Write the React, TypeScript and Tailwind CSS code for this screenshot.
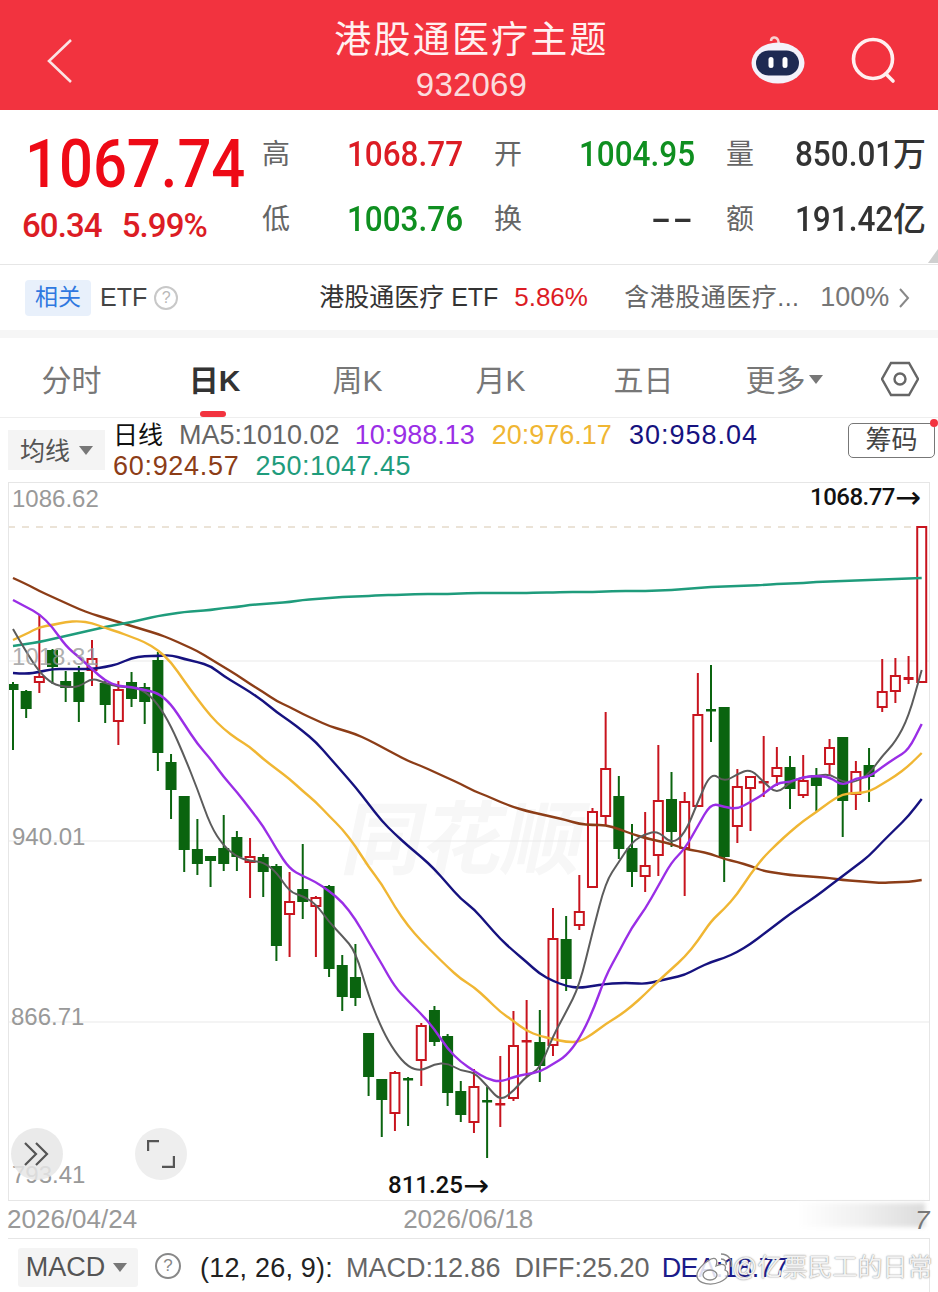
import React from "react";

type Candle = [number, number, number, number, number];

// [up, wickTop, bodyTop, bodyBottom, wickBottom], page y coordinates
const candles: Candle[] = [
  [0,683,685,691,751],[0,691,692,710,719],[1,616,678,683,694],[0,650,651,668,685],[0,672,682,689,703],
  [0,667,673,703,723],[1,641,660,671,687],[0,682,684,706,724],[1,682,691,722,746],[0,673,683,700,708],
  [0,684,688,703,725],[0,653,661,754,772],[0,755,763,791,820],[0,797,797,851,873],[0,820,850,865,876],
  [0,857,857,862,888],[0,816,849,865,872],[0,832,838,858,872],[1,839,858,863,899],[0,855,858,873,898],
  [0,865,867,947,962],[1,873,903,915,958],[0,845,890,903,920],[1,897,899,907,958],[0,886,887,970,978],
  [0,956,966,998,1012],[0,945,978,999,1007],[0,1034,1034,1078,1097],[0,1080,1080,1101,1138],[1,1072,1074,1114,1132],
  [0,1078,1079,1081,1127],[1,1024,1027,1061,1087],[0,1007,1011,1043,1047],[0,1035,1037,1094,1107],[0,1082,1092,1116,1123],
  [1,1070,1088,1123,1134],[0,1088,1101,1103,1159],[1,1057,1104,1106,1128],[1,1012,1047,1099,1102],[1,1001,1041,1043,1078],
  [0,1011,1043,1067,1083],[1,909,940,1046,1057],[0,917,940,980,992],[1,876,913,926,931],[1,809,813,888,888],
  [1,713,770,817,827],[0,777,797,850,860],[0,825,849,873,888],[1,813,867,877,893],[1,746,802,856,877],
  [0,773,800,833,848],[1,793,803,849,897],[1,674,716,807,807],[0,666,710,712,743],[0,708,708,858,883],
  [1,770,788,827,844],[1,778,778,789,832],[1,737,782,784,798],[1,748,769,777,787],[0,757,768,790,810],
  [1,756,782,796,799],[0,769,776,787,812],[1,740,749,765,777],[0,738,738,802,838],[1,762,773,795,811],
  [0,749,766,778,803],[1,660,693,708,713],[1,659,677,692,704],[1,657,678,681,685],[1,528,528,683,683],
];

const ma5 = [630,653,673,685,688,688,679,684,688,688,692,705,727,757,790,827,847,858,862,863,873,893,897,905,923,937,952,997,1030,1053,1068,1072,1065,1064,1072,1073,1087,1102,1092,1077,1070,1037,1013,987,933,883,863,843,835,832,845,835,803,773,783,775,770,783,795,783,778,777,775,783,783,775,757,743,718,671];
const ma10 = [601,608,615,628,647,658,670,682,687,688,691,694,705,725,745,760,778,793,810,827,850,870,877,883,892,903,920,943,965,988,1002,1015,1030,1050,1063,1072,1080,1083,1078,1075,1073,1065,1057,1040,1013,977,953,928,910,887,863,850,827,804,808,810,803,795,784,783,778,777,778,787,779,778,768,759,751,725];
const ma20 = [641,635,628,626,623,622,624,629,633,638,643,651,663,682,700,717,730,740,748,760,770,780,792,803,817,830,847,868,885,908,927,942,955,968,980,988,1000,1013,1022,1032,1037,1040,1043,1043,1035,1025,1017,1007,995,982,970,958,942,922,910,895,875,858,845,833,822,813,803,795,794,793,785,777,767,754];
const ma30 = [674,675,673,670,670,670,670,668,665,659,657,657,656,660,663,667,677,685,693,702,713,722,732,743,758,773,788,805,822,835,847,858,870,885,900,910,925,940,952,963,975,982,987,989,987,985,984,984,985,982,979,976,969,963,959,953,945,935,925,915,906,897,887,877,867,857,843,830,817,800];
const ma60 = [579,585,592,598,604,610,615,619,623,627,631,635,640,646,652,660,668,676,685,693,702,708,715,721,727,731,735,741,748,755,762,767,773,779,785,792,797,803,808,812,815,818,821,825,826,826,830,835,839,842,845,850,852,855,860,863,867,872,874,876,877,878,879,881,882,883,884,883,883,881];
const ma250 = [647,645,643,640,637,634,631,628,625.5,623,620,617,615,613,612,611,609,608,606,605,604,603,601,600,599,598,597.5,597,596,596,595.5,595,595,595,594.5,594,594,594,594,594,593.5,593.5,593,593,593,592.5,592,592,592,591.5,591,590,589,588,587.5,587,586.5,586,585,584.5,584,583,582.5,582,581.5,581,580.5,580,579.5,579];

const candleX = (i: number) => 13 + i * 13.17;

// quadratic smoothing through the midpoints, the app's lines have no hard corners
const toPath = (ys: number[]) => {
  let d = `M${candleX(0).toFixed(1)} ${ys[0]}`;
  for (let i = 1; i < ys.length - 1; i++) {
    const midX = (candleX(i) + candleX(i + 1)) / 2;
    const midY = (ys[i] + ys[i + 1]) / 2;
    d += ` Q${candleX(i).toFixed(1)} ${ys[i]} ${midX.toFixed(1)} ${midY}`;
  }
  return d + ` L${candleX(ys.length - 1).toFixed(1)} ${ys[ys.length - 1]}`;
};

const RED = "#c8141e";
const GREEN = "#0a640f";

const KLineChart = () => (
  <svg viewBox="9 484 920 717" className="absolute inset-0 w-full h-full">
    {[662, 842, 1023].map((y) => (
      <line key={y} x1="8" x2="930" y1={y} y2={y} stroke="#eaeaea" strokeWidth="1.2" />
    ))}
    <line x1="8" x2="930" y1="528" y2="528" stroke="#d8c8b0" strokeWidth="1.2" strokeDasharray="7 7" />
    {candles.map(([up, wickTop, bodyTop, bodyBottom, wickBottom], i) => {
      const x = candleX(i);
      const color = up ? RED : GREEN;
      const isDoji = bodyBottom - bodyTop < 4;
      return (
        <g key={i}>
          <line x1={x} x2={x} y1={wickTop} y2={wickBottom} stroke={color} strokeWidth="2" />
          {isDoji ? (
            <rect x={x - 5} y={bodyTop} width="10" height={Math.max(bodyBottom - bodyTop, 2.5)} fill={color} />
          ) : up ? (
            <rect x={x - 4.5} y={bodyTop} width="9" height={bodyBottom - bodyTop} fill="#fff" stroke={color} strokeWidth="2" />
          ) : (
            <rect x={x - 5.5} y={bodyTop} width="11" height={bodyBottom - bodyTop} fill={color} />
          )}
        </g>
      );
    })}
    <path d={toPath(ma60)} fill="none" stroke="#8c3d17" strokeWidth="2.4" />
    <path d={toPath(ma250)} fill="none" stroke="#1f9c7c" strokeWidth="2.4" />
    <path d={toPath(ma30)} fill="none" stroke="#16127f" strokeWidth="2.4" />
    <path d={toPath(ma20)} fill="none" stroke="#f0b633" strokeWidth="2.4" />
    <path d={toPath(ma5)} fill="none" stroke="#5c5c5c" strokeWidth="2" />
    <path d={toPath(ma10)} fill="none" stroke="#9a2ee6" strokeWidth="2.4" />
  </svg>
);

const Stat = ({ label, value, unit, color, stretch = "scale-x-[0.9]" }: { label: string; value: string; unit?: string; color: string; stretch?: string }) => (
  <div className="flex items-center justify-between">
    <span className="text-[28px] text-[#666]">{label}</span>
    <span className={`flex items-baseline text-[35px] font-medium font-['Roboto','Noto_Sans_CJK_SC',sans-serif] ${color}`}>
      <span className={`inline-block origin-right ${stretch}`}>{value}</span>
      {unit && <span className="text-[33px]">{unit}</span>}
    </span>
  </div>
);

const tabs = ["分时", "日K", "周K", "月K", "五日"];

export default function App() {
  return (
    <div className="w-[938px] h-[1292px] overflow-hidden bg-white font-['Liberation_Sans','Noto_Sans_CJK_SC',sans-serif]">
      {/* header */}
      <div className="flex h-[110px] bg-[#f2333f] text-white">
        <div className="w-[304px] flex items-center pl-[47px] pt-[11px]">
          <svg width="26" height="44" viewBox="0 0 26 44" fill="none" stroke="#fbe3e4" strokeWidth="2.6">
            <polyline points="24,1 2,22 24,43" />
          </svg>
        </div>
        <div className="w-[335px] flex flex-col items-center pt-[15px]">
          <div className="text-[37px] leading-[52px] tracking-[2.2px] text-[#fff1f1] whitespace-nowrap">港股通医疗主题</div>
          <div className="text-[33px] leading-[36px] tracking-[0.2px] text-[#fbdcdd]">932069</div>
        </div>
        <div className="flex-1 flex items-start pt-[37px] pl-[111px] gap-[44px]">
          <svg width="56" height="50" viewBox="0 0 56 50" className="-mt-[2px]">
            <path d="M21 6 C21 2 26 1 28 5 L29 9" fill="none" stroke="#f8d0d0" strokeWidth="2.5" />
            <ellipse cx="28" cy="28" rx="26.5" ry="20.5" fill="#f4f2fa" />
            <rect x="6" y="15.5" width="43" height="25" rx="12.5" fill="#1e2a52" />
            <rect x="18.5" y="22" width="5" height="11" rx="2.5" fill="#fff" />
            <rect x="32.5" y="22" width="5" height="11" rx="2.5" fill="#fff" />
          </svg>
          <svg width="48" height="50" viewBox="0 0 48 50" fill="none" stroke="#fff0f0" strokeWidth="3.6" className="-mt-[2px]">
            <circle cx="23" cy="24" r="19.5" />
            <line x1="36" y1="39" x2="43" y2="46" strokeLinecap="round" />
          </svg>
        </div>
      </div>

      {/* quote */}
      <div className="relative flex h-[155px] border-b border-[#e6e6e6] pl-[22px]">
        <div className="w-[240px] flex flex-col">
          <div className="text-[66px] leading-[64px] mt-[23px] ml-[3px] font-medium origin-left scale-x-[0.905] whitespace-nowrap text-[#ee0a16] font-['Roboto',sans-serif]">1067.74</div>
          <div className="flex gap-[20px] text-[33px] leading-[36px] mt-[11px] font-medium tracking-[-0.9px] text-[#dc1c24] font-['Roboto',sans-serif]">
            <span>60.34</span>
            <span>5.99%</span>
          </div>
        </div>
        <div className="grid grid-cols-[201px_201px_200px] gap-x-[31px] content-start pt-[25px] gap-y-[25px] auto-rows-[40px]">
          <Stat label="高" value="1068.77" color="text-[#dc1c24]" />
          <Stat label="开" value="1004.95" color="text-[#0f8f20]" />
          <Stat label="量" value="850.01" unit="万" color="text-[#333]" />
          <Stat label="低" value="1003.76" color="text-[#0f8f20]" />
          <Stat label="换" value="--" color="text-[#333]" stretch="scale-x-[1.7] tracking-[1px]" />
          <Stat label="额" value="191.42" unit="亿" color="text-[#333]" />
        </div>
        <svg width="10" height="14" viewBox="0 0 10 14" className="absolute right-0 bottom-[1px]">
          <polygon points="10,0 10,14 0,14" fill="#cfcfcf" />
        </svg>
      </div>

      {/* related ETF */}
      <div className="flex items-center h-[65px] pl-[25px] text-[25px] whitespace-nowrap">
        <span className="w-[66px] h-[36px] flex items-center justify-center rounded-[4px] bg-[#e8f0fb] text-[23px] text-[#2f78e0]">相关</span>
        <span className="ml-[9px] text-[#444]">ETF</span>
        <span className="ml-[7px] w-[24px] h-[24px] rounded-full border-2 border-[#c8c8c8] flex items-center justify-center text-[16px] text-[#b8b8b8]">?</span>
        <span className="ml-[141px] w-[180px] text-[#333]">港股通医疗 ETF</span>
        <span className="ml-[15px] w-[73px] text-[26px] text-[#dc1c24]">5.86%</span>
        <span className="ml-[37px] w-[181px] text-[#666] tracking-[0.5px]">含港股通医疗...</span>
        <span className="ml-[15px] text-[27px] text-[#777]">100%</span>
        <svg width="12" height="22" viewBox="0 0 12 22" fill="none" stroke="#888" strokeWidth="2" className="ml-[9px]">
          <polyline points="2,2 10,11 2,20" />
        </svg>
      </div>
      <div className="h-[8px] bg-[#f6f6f6]" />

      {/* period tabs */}
      <div className="flex h-[80px] border-b border-[#eeeeee] text-[30px] text-[#777]">
        {tabs.map((t, i) => (
          <div key={t} className="relative w-[143px] flex items-center justify-center pt-[5px]">
            <span className={i === 1 ? "font-bold text-[#333]" : ""}>{t}</span>
            {i === 1 && <span className="absolute bottom-0 left-[57px] w-[26px] h-[6px] rounded-full bg-[#f2333f]" />}
          </div>
        ))}
        <div className="w-[143px] flex items-center justify-center pt-[5px] pr-[5px]">
          更多
          <svg width="14" height="10" viewBox="0 0 14 10" className="ml-[3px]"><polygon points="0,0 14,0 7,9" fill="#777" /></svg>
        </div>
        <div className="flex items-center pl-[23px] pt-[2px]">
          <svg width="38" height="36" viewBox="0 0 38 36" fill="none" stroke="#666" strokeWidth="2.4">
            <polygon points="10,2 28,2 37,18 28,34 10,34 1,18" />
            <circle cx="19" cy="18" r="5.5" />
          </svg>
        </div>
      </div>

      {/* ma legend */}
      <div className="relative h-[64px] text-[27px] leading-[31px] whitespace-nowrap">
        <div className="absolute left-[8px] top-[12px] w-[97px] h-[40px] flex items-center justify-center bg-[#f4f4f4] pt-[2px] text-[25px] text-[#555]">
          均线
          <svg width="14" height="10" viewBox="0 0 14 10" className="ml-[9px]"><polygon points="0,0 14,0 7,9" fill="#777" /></svg>
        </div>
        <div className="ml-[113px] pt-[2px]">
          <div className="flex">
            <span className="text-[#111] text-[25px] w-[66px]">日线</span>
            <span className="text-[#666]">MA5:1010.02</span>
            <span className="ml-[15px] text-[#9a2ee6]">10:988.13</span>
            <span className="ml-[17px] text-[#f0b633]">20:976.17</span>
            <span className="ml-[17px] text-[#16127f] tracking-[1px]">30:958.04</span>
          </div>
          <div className="flex">
            <span className="text-[#8c3d17] tracking-[0.7px]">60:924.57</span>
            <span className="ml-[16px] text-[#1f9c7c] tracking-[0.5px]">250:1047.45</span>
          </div>
        </div>
        <div className="absolute left-[848px] top-[5px] w-[87px] h-[35px] rounded-[5px] border border-[#777] flex items-center justify-center text-[26px] text-[#444]">筹码</div>
        <span className="absolute left-[930px] top-[1px] w-[8px] h-[8px] rounded-full bg-[#f2333f]" />
      </div>

      {/* chart */}
      <div className="relative ml-[8px] w-[922px] h-[719px] border border-[#e6e6e6] overflow-hidden text-[24px] leading-[30px]">
        <div className="absolute left-[336px] top-[318px] text-[80px] leading-[80px] font-bold -skew-x-12 text-[#f7f7f7]">同花顺</div>
        <KLineChart />
        <span className="absolute left-[3px] top-[1px] text-[#999]">1086.62</span>
        <span className="absolute left-[3px] top-[159px] text-[#999]/80">1018.31</span>
        <span className="absolute left-[3px] top-[339px] text-[#999]">940.01</span>
        <span className="absolute left-[2px] top-[519px] text-[#999]">866.71</span>
        <span className="absolute left-[3px] top-[677px] text-[#999]">793.41</span>
        <span className="absolute left-[801px] -top-[1px] flex items-center font-medium text-[#111] tracking-[-0.5px] font-['Roboto',sans-serif]">
          1068.77<span className="font-normal text-[31px] leading-[30px] font-['DejaVu_Sans',sans-serif]">→</span>
        </span>
        <span className="absolute left-[379px] top-[687px] flex items-center font-medium text-[#111] font-['Roboto',sans-serif]">
          811.25<span className="font-normal text-[31px] leading-[30px] font-['DejaVu_Sans',sans-serif]">→</span>
        </span>
        <div className="absolute left-[2px] top-[645px] w-[52px] h-[52px] rounded-full bg-[#e6e6e6]/85 flex items-center justify-center">
          <svg width="28" height="28" viewBox="0 0 28 28" fill="none" stroke="#555" strokeWidth="2.2">
            <polyline points="2,3 13,14 2,25" />
            <polyline points="13,3 24,14 13,25" />
          </svg>
        </div>
        <div className="absolute left-[126px] top-[645px] w-[52px] h-[52px] rounded-full bg-[#eeeeee] flex items-center justify-center">
          <svg width="28" height="28" viewBox="0 0 28 28" fill="none" stroke="#555" strokeWidth="2.4">
            <polyline points="1,11 1,1 12,1" />
            <polyline points="27,16 27,27 15,27" />
          </svg>
        </div>
      </div>

      {/* date axis */}
      <div className="relative flex h-[37px] items-center pl-[7px] text-[26px] text-[#999]">
        <span>2026/04/24</span>
        <span className="ml-[266px]">2026/06/18</span>
        <div className="absolute left-[797px] top-[2px] w-[128px] h-[24px] bg-linear-to-r from-white via-[#f0f0f0] to-[#dcdcdc] blur-[2px]" />
        <span className="absolute left-[915px] top-0 italic text-[#777]">7</span>
      </div>

      {/* macd */}
      <div className="relative ml-[8px] w-[922px] h-[60px] border-t border-r border-[#e6e6e6] text-[27px] whitespace-nowrap">
        <div className="absolute left-[10px] top-[9px] w-[120px] h-[39px] rounded-[3px] bg-[#f4f4f4] flex items-center justify-center pr-[3px] text-[#555]">
          MACD
          <svg width="14" height="10" viewBox="0 0 14 10" className="ml-[8px]"><polygon points="0,0 14,0 7,9" fill="#777" /></svg>
        </div>
        <span className="absolute left-[147px] top-[14px] w-[26px] h-[26px] rounded-full border-2 border-[#888] flex items-center justify-center text-[17px] text-[#888]">?</span>
        <div className="flex pl-[192px] pt-[9px]">
          <span className="text-[#222] tracking-[0.2px]">(12, 26, 9):</span>
          <span className="ml-[13px] text-[#666]">MACD:12.86</span>
          <span className="ml-[14px] text-[#666]">DIFF:25.20</span>
          <span className="ml-[12px] text-[#1b1b8a] tracking-[-0.5px]">DEA:18.77</span>
        </div>
        {/* weibo watermark */}
        <svg width="42" height="36" viewBox="0 0 42 36" className="absolute left-[686px] top-[12px]">
          <path d="M17 8 C8 13 2 20 3 26 C5 33 17 35 26 31 C35 27 36 21 31 19 C33 13 28 12 22 15 C24 9 22 6 17 8 Z" fill="#ffffff" fillOpacity="0.85" stroke="#8a8a8a" strokeWidth="1.3" />
          <ellipse cx="16" cy="24" rx="7" ry="5" fill="none" stroke="#8a8a8a" strokeWidth="1.3" />
          <path d="M27 3 C34 3 39 9 37 16 M27 8 C31 8 33 11 32 14" fill="none" stroke="#8a8a8a" strokeWidth="1.5" />
        </svg>
        <span className="absolute left-[724px] top-[10px] text-[25px] text-[#f2f2f2] [text-shadow:0_0_1.5px_#666]">@亿票民工的日常</span>
        <span className="absolute left-[597px] bottom-0 w-[3px] h-[5px] bg-[#c8141e]" />
      </div>
    </div>
  );
}
